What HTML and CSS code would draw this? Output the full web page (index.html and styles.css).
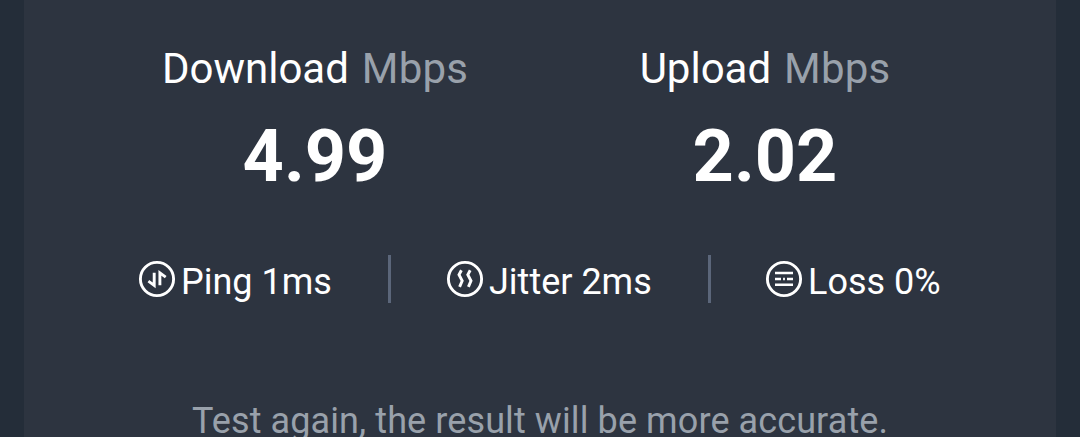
FILE: index.html
```html
<!DOCTYPE html>
<html lang="en">
<head>
<meta charset="utf-8">
<title>Speed test</title>
<link rel="stylesheet" href="styles.css">
</head>
<body>
<main class="panel">
  <section class="speeds">
    <div class="speed">
      <div class="label">Download <span class="unit">Mbps</span></div>
      <div class="value">4.99</div>
    </div>
    <div class="speed">
      <div class="label">Upload <span class="unit">Mbps</span></div>
      <div class="value">2.02</div>
    </div>
  </section>
  <section class="metrics">
    <div class="metric ping">
      <svg class="icon" viewBox="0 0 38 38"><circle cx="19" cy="19" r="16.6"/><path d="M10.4 21.2l5.8 4.2V12.8M21.9 25.2V12.9l5.8 4.2"/></svg>
      <span class="reading">Ping 1ms</span>
    </div>
    <div class="metric jitter">
      <svg class="icon" viewBox="0 0 38 38"><circle cx="19" cy="19" r="16.6"/><path d="M15.4 10.3l-2.4 4.4 3.2 6.2-2.6 6M24.2 10.3l-2.4 4.4 3.2 6.2-2.6 6"/></svg>
      <span class="reading">Jitter 2ms</span>
    </div>
    <div class="metric loss">
      <svg class="icon" viewBox="0 0 38 38"><circle cx="19" cy="19" r="16.6"/><path class="bars" d="M10 13.1h18M10 18.9h6M18.1 18.9h1.8M22 18.9h6M10 24.7h18"/></svg>
      <span class="reading">Loss 0%</span>
    </div>
  </section>
  <p class="note">Test again, the result will be more accurate.</p>
</main>
</body>
</html>
```
FILE: styles.css
```css
* { box-sizing: border-box; }
body {
  margin: 0;
  height: 437px;
  overflow: hidden;
  padding: 0 24px;
  background: #242d39;
  color: #fff;
  font-family: Roboto, sans-serif;
}
.panel { height: 437px; padding-top: 44px; background: #2d3440; overflow: hidden; }
.speeds { display: grid; grid-template-columns: 306px 250px; column-gap: 172px; padding-left: 138px; }
.speed { display: flex; flex-direction: column; align-items: center; white-space: nowrap; }
.label { font-size: 42px; line-height: 50px; }
.unit { margin-left: 2.5px; color: #99a1ab; letter-spacing: 0.2px; }
.value { margin-top: 21px; font-size: 72px; line-height: 84px; font-weight: 700; }
.metrics { display: flex; height: 48px; margin-top: 56px; padding-left: 114px; }
.metric { display: flex; align-items: center; width: 308px; font-size: 36px; line-height: 48px; white-space: nowrap; }
.ping { width: 253px; border-right: 3px solid #5b667a; }
.jitter { width: 320px; padding-left: 55px; border-right: 3px solid #5b667a; }
.loss { padding-left: 54px; }
.icon { width: 38px; height: 38px; margin-right: 5px; fill: none; stroke: #fff; stroke-width: 2.9; }
.bars { stroke-width: 2.5; }
.reading { padding-top: 6px; }
.note { margin: 97px 0 0; text-align: center; font-size: 36px; line-height: 42px; letter-spacing: 0.1px; color: #99a1ab; }
```
